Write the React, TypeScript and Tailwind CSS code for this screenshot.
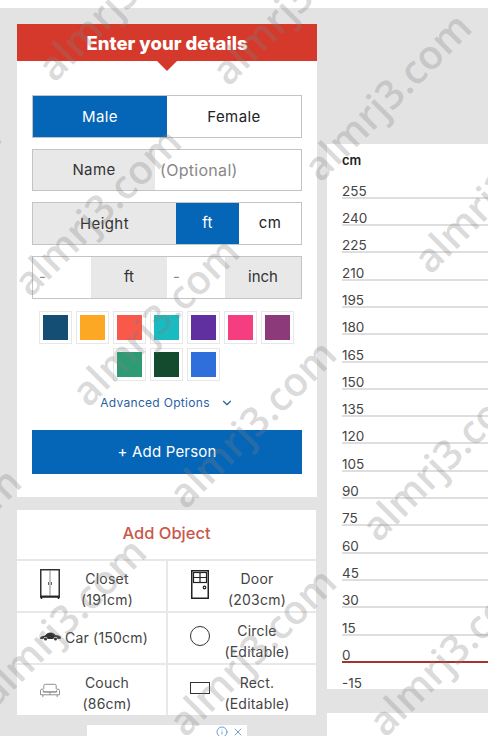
import { ChevronDown, Info, X } from "lucide-react";

const swatches = [
  "bg-[#144e75]",
  "bg-[#fda824]",
  "bg-[#f9594b]",
  "bg-[#19bbc1]",
  "bg-[#6030a0]",
  "bg-[#f43e80]",
  "bg-[#8c3a7a]",
  "bg-[#2e9b75]",
  "bg-[#144a2e]",
  "bg-[#2f6fdc]",
];

const scale = [255, 240, 225, 210, 195, 180, 165, 150, 135, 120, 105, 90, 75, 60, 45, 30, 15];

// watermark stamps, each one anchored at the bottom-left of its text
const stamps = [
  "left-[58px] top-[47px]",
  "left-[232px] top-[51px]",
  "left-[324px] top-[147px]",
  "left-[434px] top-[239px]",
  "left-[34px] top-[262px]",
  "left-[92px] top-[372px]",
  "left-[189px] top-[474px]",
  "left-[382px] top-[507px]",
  "left-[-1px] top-[672px]",
  "left-[189px] top-[702px]",
  "left-[389px] top-[702px]",
  "left-[-126px] top-[602px]",
  "left-[-146px] top-[257px]",
];

function ClosetIcon() {
  return (
    <svg width="20" height="30" viewBox="0 0 20 30" fill="none" className="flex-shrink-0">
      <rect x="0.75" y="0.75" width="18.5" height="26.5" stroke="#333" strokeWidth="1.5" />
      <path d="M10 1v26" stroke="#888" strokeWidth="1" />
      <path d="M8.500 13v3M11.500 13v3" stroke="#666" strokeWidth="1" />
      <path d="M0 28h20M1.500 28v2M18.500 28v2" stroke="#222" strokeWidth="1.5" />
    </svg>
  );
}

function DoorIcon() {
  return (
    <svg width="18" height="29" viewBox="0 0 18 29" fill="none" className="flex-shrink-0">
      <rect x="0.75" y="0.75" width="16.500" height="27.500" fill="#fff" stroke="#222" strokeWidth="1.5" />
      <rect x="2.500" y="2.500" width="13" height="10" stroke="#222" strokeWidth="1.2" />
      <path d="M9 2.500v10M2.500 7.500h13" stroke="#222" strokeWidth="1.2" />
      <circle cx="13.500" cy="17.500" r="1.300" stroke="#222" strokeWidth="1.2" />
    </svg>
  );
}

function CarIcon() {
  return (
    <svg width="21" height="9" viewBox="0 0 21 9" className="flex-shrink-0">
      <path
        d="M0 6.200C0 4.600 2 4 5 3.500 6.500 1.500 8 .5 10.500.5c2.500 0 3.800 1 5 2.600 3 .3 5.200 1 5.500 2.600.1.800-.4 1.200-1.500 1.300h-2a2 2 0 0 0-4 0H7.500a2 2 0 0 0-4 0H1.200C.4 7 0 6.800 0 6.200z"
        fill="#333"
      />
      <circle cx="5.500" cy="7" r="1.500" fill="#333" />
      <circle cx="15.500" cy="7" r="1.500" fill="#333" />
    </svg>
  );
}

function CouchIcon() {
  return (
    <svg width="20" height="15" viewBox="0 0 21 15" fill="none" stroke="#8a8a8a" strokeWidth="1" className="flex-shrink-0">
      <path d="M4 6V2.500C4 1.500 4.600 1 5.500 1h10c.9 0 1.500.5 1.500 1.500V6" />
      <path d="M.5 7.500C.5 6.500 1.200 6 2 6s1.500.5 1.500 1.500V9h14V7.500C17.500 6.500 18.200 6 19 6s1.500.5 1.500 1.500V12H.5z" />
      <path d="M3.500 9h14M10.500 9v3M3 12v2.500M18 12v2.500" />
    </svg>
  );
}

function ObjectCell({
  icon,
  lines,
  right,
  single,
  centered,
}: {
  icon: React.ReactNode;
  lines: string[];
  right?: boolean;
  single?: boolean;
  centered?: boolean;
}) {
  return (
    <div
      className={`bg-white h-[50px] flex items-center text-[14px] leading-[21px] tracking-[0.2px] text-[#444] ${
        right ? "pl-[22px]" : "pl-[23px]"
      }`}
    >
      <div className={`w-[20px] flex justify-center flex-shrink-0 ${centered ? "" : "mb-[4px]"}`}>{icon}</div>
      <div
        className={
          single
            ? "ml-[5px] mb-[2px] whitespace-nowrap"
            : "flex-1 text-center pr-[12px] pt-[6px] whitespace-nowrap"
        }
      >
        {lines.map((l) => (
          <div key={l}>{l}</div>
        ))}
      </div>
    </div>
  );
}

export default function App() {
  return (
    <div className="relative w-[488px] h-[736px] overflow-hidden bg-white font-['Inter',sans-serif]">
      <div className="mt-[8px] h-[728px] bg-[#e3e3e3] flex pt-[16px] pl-[17px]">
        {/* Left column */}
        <div className="w-[300px] flex-shrink-0">
          <div className="bg-white h-[473px]">
            <div className="relative bg-[#d5392b] h-[37px] pt-[2px] flex items-center justify-center text-white font-extrabold text-[18.500px] tracking-[0px]">
              Enter your details
              <div className="absolute left-[140px] top-[37px] border-x-[10px] border-x-transparent border-t-[10px] border-t-[#d5392b]" />
            </div>

            <div className="px-[15px] pt-[34px]">
              <div className="flex h-[43px] border border-[#c4c4c4] text-[15px] tracking-[0.4px]">
                <div className="w-[134px] bg-[#0565b7] text-white flex items-center justify-center pt-[2px]">Male</div>
                <div className="flex-1 text-[#222] flex items-center justify-center pt-[2px]">Female</div>
              </div>

              <div className="flex h-[42px] mt-[11px] border border-[#c4c4c4] text-[15px] tracking-[0.4px]">
                <div className="w-[122px] bg-[#e8e8e8] text-[#333] flex items-center justify-center">Name</div>
                <div className="flex-1 pl-[5px] text-[#888] flex items-center text-[16px] tracking-[0.3px]">(Optional)</div>
              </div>

              <div className="flex h-[43px] mt-[11px] border border-[#c4c4c4] text-[15px] tracking-[0.4px]">
                <div className="w-[143px] bg-[#e8e8e8] text-[#333] flex items-center justify-center pt-[2px]">Height</div>
                <div className="w-[63px] bg-[#0565b7] text-white flex items-center justify-center">ft</div>
                <div className="flex-1 text-[#222] flex items-center justify-center">cm</div>
              </div>

              <div className="flex h-[43px] mt-[11px] border border-[#c4c4c4] text-[15px]">
                <div className="w-[58px] pl-[6px] text-[#888] flex items-center">-</div>
                <div className="w-[76px] bg-[#e8e8e8] text-[#333] flex items-center justify-center">ft</div>
                <div className="w-[58px] pl-[6px] text-[#888] flex items-center">-</div>
                <div className="flex-1 bg-[#e8e8e8] text-[#333] flex items-center justify-center">inch</div>
              </div>

              <div className="flex flex-wrap justify-center gap-[4px] mt-[12px] ml-[7px] w-[255px]">
                {swatches.map((c) => (
                  <div key={c} className="w-[33px] h-[33px] border border-[#e8e8e8] p-[3px]">
                    <div className={`w-full h-full ${c}`} />
                  </div>
                ))}
              </div>

              <div className="flex items-center justify-center gap-[10px] mt-[14px] h-[16px] text-[12px] tracking-[0.3px] text-[#2a5fa5]">
                Advanced Options
                <ChevronDown size={14} strokeWidth={2} />
              </div>

              <div className="mt-[19px] h-[44px] bg-[#0565b7] text-white flex items-center justify-center text-[15px] tracking-[0.2px]">
                + Add Person
              </div>
            </div>
          </div>

          <div className="mt-[13px] bg-[#e8e8e8] w-[299px]">
            <div className="bg-white h-[49px] pb-[3px] flex items-center justify-center text-[16.500px] font-medium text-[#c9584a]">
              Add Object
            </div>
            <div className="grid grid-cols-[149px_148px] gap-[2px] pt-[2px]">
              <ObjectCell icon={<ClosetIcon />} lines={["Closet", "(191cm)"]} />
              <ObjectCell icon={<DoorIcon />} lines={["Door", "(203cm)"]} right />
              <ObjectCell icon={<CarIcon />} lines={["Car (150cm)"]} single />
              <ObjectCell
                icon={<div className="w-[20px] h-[20px] rounded-full border border-[#333] flex-shrink-0" />}
                lines={["Circle", "(Editable)"]}
                right
              />
              <ObjectCell icon={<CouchIcon />} lines={["Couch", "(86cm)"]} centered />
              <ObjectCell
                icon={<div className="w-[20px] h-[12px] border border-[#333] flex-shrink-0" />}
                lines={["Rect.", "(Editable)"]}
                right
              />
            </div>
          </div>

          <div className="mt-[10px] ml-[70px] w-[160px] h-[12px] bg-white flex justify-end items-start gap-[4px] pr-[3px] pt-px text-[#3b82c4]">
            <Info size={12} strokeWidth={1.5} />
            <X size={12} strokeWidth={1.5} />
          </div>
        </div>

        {/* Right column: height chart */}
        <div className="ml-[10px] flex-1 min-w-0">
          <div className="mt-[120px] h-[545px] bg-white pl-[15px] overflow-hidden">
            <div className="h-[27.500px] flex items-end pb-px text-[13px] font-semibold text-[#222]">cm</div>
            {scale.map((n) => (
              <div
                key={n}
                className="h-[27.300px] flex items-end border-b-2 border-[#dedede] text-[13.500px] leading-[11px] text-[#444]"
              >
                {n}
              </div>
            ))}
            <div className="h-[27.300px] flex items-end border-b-2 border-[#a8322d] text-[13.500px] leading-[11px] text-[#444]">
              0
            </div>
            <div className="h-[27.300px] flex items-end pb-px text-[13.500px] leading-[11px] text-[#444]">-15</div>
          </div>
          <div className="mt-[24px] h-[40px] bg-white" />
        </div>
      </div>

      {/* Watermark */}
      {stamps.map((s) => (
        <div
          key={s}
          className={`absolute ${s} h-[40px] leading-[40px] origin-bottom-left -rotate-45 text-[40px] font-semibold text-[#808080]/30 whitespace-nowrap pointer-events-none font-['Open_Sans',sans-serif]`}
        >
          almrj3.com
        </div>
      ))}
    </div>
  );
}
